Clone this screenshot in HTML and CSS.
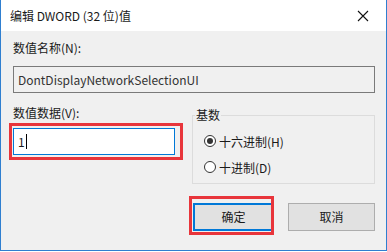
FILE: index.html
```html
<!DOCTYPE html>
<html>
<head>
<meta charset="utf-8">
<link rel="stylesheet" href="styles.css">
</head>
<body>
<div class="window">
  <div class="titlebar">
    <span class="title">编辑 DWORD (32 位)值</span>
    <svg class="close" width="12" height="12" viewBox="0 0 12 12"><path d="M1 1 L11 11 M11 1 L1 11" stroke="#111" stroke-width="1.1" fill="none"/></svg>
  </div>
  <div class="content">
    <div class="label first">数值名称(N):</div>
    <div class="namebox">DontDisplayNetworkSelectionUI</div>
    <div class="row">
      <div class="datacol">
        <div class="label">数值数据(V):</div>
        <div class="datawrap">
          <div class="databox"><span>1</span><span class="caret"></span></div>
          <div class="mark mark-data"></div>
        </div>
      </div>
      <div class="group">
        <div class="legend">基数</div>
        <div class="radio"><span class="dot checked"></span><span>十六进制(H)</span></div>
        <div class="radio"><span class="dot"></span><span>十进制(D)</span></div>
      </div>
    </div>
    <div class="buttons">
      <div class="btnwrap">
        <div class="btn ok">确定</div>
        <div class="mark mark-ok"></div>
      </div>
      <div class="btn cancel">取消</div>
    </div>
  </div>
</div>
</body>
</html>
```
FILE: styles.css
```css
html, body {
  margin: 0;
  padding: 0;
  background: #ffffff;
}
body {
  font-family: "Noto Sans CJK SC", "Noto Sans", sans-serif;
  font-size: 12px;
  color: #1a1a1a;
}
.window {
  width: 385px;
  height: 250px;
  border: 1px solid #2f7fd0;
  border-top: none;
  display: flex;
  flex-direction: column;
  background: #f0f0f0;
}
.titlebar {
  height: 31px;
  flex: none;
  background: #ffffff;
  display: flex;
  align-items: center;
  justify-content: space-between;
  padding: 0 17px 0 9px;
}
.title {
  font-size: 12px;
  line-height: 16px;
}
.close {
  display: block;
}
.content {
  flex: 1;
  padding: 0 11px 0 12px;
  display: flex;
  flex-direction: column;
}
.label {
  line-height: 16px;
  height: 16px;
}
.label.first {
  margin-top: 9px;
}
.namebox {
  margin-top: 10px;
  height: 25px;
  border: 1px solid #7a7a7a;
  background: #f0f0f0;
  padding-left: 4px;
  line-height: 25px;
  color: #333;
}
.row {
  display: flex;
  margin-top: 12px;
}
.datacol {
  width: 162px;
  display: flex;
  flex-direction: column;
}
.datawrap {
  position: relative;
  margin-top: 7px;
}
.databox {
  height: 25px;
  border: 1px solid #0078d7;
  background: #ffffff;
  padding-left: 4px;
  line-height: 25px;
  display: flex;
  align-items: center;
}
.caret {
  display: inline-block;
  width: 1px;
  height: 15px;
  background: #000;
  margin-left: 1px;
}
.mark {
  position: absolute;
  border: 3px solid #e8353b;
  pointer-events: none;
}
.mark-data {
  left: -4px;
  top: -5px;
  width: 168px;
  height: 31px;
}
.group {
  margin-left: 17px;
  flex: 1;
  position: relative;
  border: 1px solid #dcdcdc;
  height: 69px;
  margin-top: 10px;
  padding-top: 12px;
  box-sizing: border-box;
  display: flex;
  flex-direction: column;
}
.legend {
  position: absolute;
  top: -9px;
  left: 2px;
  background: #f0f0f0;
  padding: 0 1px;
  line-height: 16px;
}
.radio {
  display: flex;
  align-items: center;
  height: 26px;
  padding-left: 11px;
}
.dot {
  width: 12px;
  height: 12px;
  border: 1px solid #333;
  border-radius: 50%;
  background: #fff;
  box-sizing: border-box;
  margin-right: 3px;
  position: relative;
  flex: none;
}
.dot.checked::after {
  content: "";
  position: absolute;
  left: 2px;
  top: 2px;
  width: 6px;
  height: 6px;
  border-radius: 50%;
  background: #333;
}
.buttons {
  display: flex;
  justify-content: flex-end;
  margin-top: 19px;
  gap: 14px;
}
.btnwrap {
  position: relative;
}
.btn {
  height: 26px;
  line-height: 26px;
  text-align: center;
  background: #e1e1e1;
  border: 1px solid #adadad;
}
.btn.ok {
  width: 77px;
  border: 2px solid #0078d7;
  height: 24px;
  line-height: 24px;
}
.btn.cancel {
  width: 85px;
}
.mark-ok {
  left: -4px;
  top: -7px;
  width: 79px;
  height: 33px;
}
```
